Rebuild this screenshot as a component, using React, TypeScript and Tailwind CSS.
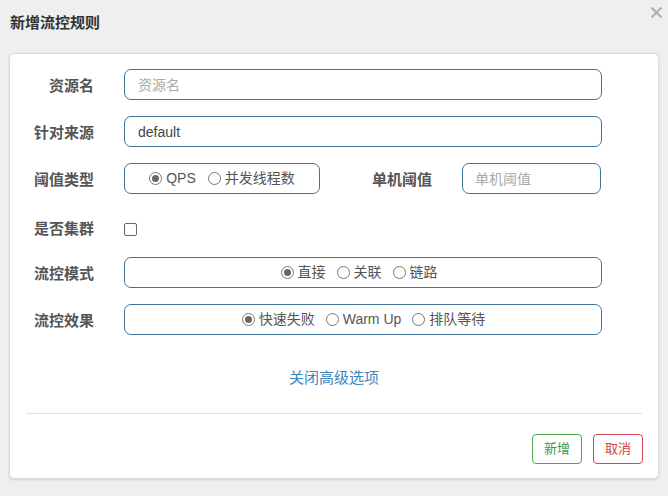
import React from 'react';

const FONT = { fontFamily: '"Liberation Sans", "Noto Sans CJK SC", sans-serif' };

function Radio({ checked, label }: { checked?: boolean; label: string }) {
  return (
    <span className="flex items-center gap-[4px] text-[14px] text-[#555]">
      <span className="w-[13px] h-[13px] rounded-full border border-[#777] flex items-center justify-center bg-white">
        {checked && <span className="w-[7px] h-[7px] rounded-full bg-[#666]" />}
      </span>
      <span>{label}</span>
    </span>
  );
}

function Label({ children }: { children: React.ReactNode }) {
  return (
    <div className="w-[84px] shrink-0 pt-[4px] text-right text-[15px] font-bold text-[#555]">{children}</div>
  );
}

const boxCls = 'h-[31px] rounded-[7px] border border-[#3f7296] bg-white';

export default function App() {
  return (
    <div className="w-[668px] h-[496px] bg-[#efeff1]" style={FONT}>
      <div className="flex items-start justify-between pl-[10px] pr-[5px] h-[42px]">
        <div className="text-[15px] font-bold text-[#333] pt-[12px]">新增流控规则</div>
        <svg width="13" height="13" viewBox="0 0 13 13" className="mt-[6px]">
          <path d="M1.5 1.5 L11.5 11.5 M11.5 1.5 L1.5 11.5" stroke="#b0b0b0" strokeWidth="2.2" />
        </svg>
      </div>
      <div className="mx-[9px] mt-[11px] h-[426px] bg-white rounded-[5px] border border-[#dcdcdc] shadow-sm">
        <div className="flex flex-col gap-[16px] pt-[15px]">
          <div className="flex items-center">
            <Label>资源名</Label>
            <input
              className={`${boxCls} ml-[30px] w-[478px] px-[13px] text-[14px] outline-none placeholder:text-[#aaa]`}
              placeholder="资源名"
            />
          </div>
          <div className="flex items-center">
            <Label>针对来源</Label>
            <input
              className={`${boxCls} ml-[30px] w-[478px] px-[13px] text-[14px] text-[#444] outline-none`}
              defaultValue="default"
            />
          </div>
          <div className="flex items-center">
            <Label>阈值类型</Label>
            <div className={`${boxCls} ml-[30px] w-[196px] flex items-center justify-center gap-[12px]`}>
              <Radio checked label="QPS" />
              <Radio label="并发线程数" />
            </div>
            <div className="ml-[52px] pt-[4px] text-[15px] font-bold text-[#555]">单机阈值</div>
            <input
              className={`${boxCls} ml-[30px] w-[139px] px-[12px] text-[14px] outline-none placeholder:text-[#aaa]`}
              placeholder="单机阈值"
            />
          </div>
          <div className="flex items-center h-[31px] pt-[4px]">
            <Label>是否集群</Label>
            <span className="ml-[30px] mt-[3px] w-[13px] h-[13px] rounded-[2px] border border-[#666] bg-white" />
          </div>
          <div className="flex items-center">
            <Label>流控模式</Label>
            <div className={`${boxCls} ml-[30px] w-[478px] flex items-center justify-center gap-[11px] pr-[8px]`}>
              <Radio checked label="直接" />
              <Radio label="关联" />
              <Radio label="链路" />
            </div>
          </div>
          <div className="flex items-center">
            <Label>流控效果</Label>
            <div className={`${boxCls} ml-[30px] w-[478px] flex items-center justify-center gap-[11px] pl-[1px]`}>
              <Radio checked label="快速失败" />
              <Radio label="Warm Up" />
              <Radio label="排队等待" />
            </div>
          </div>
        </div>
        <div className="text-center mt-[32px] text-[15px] text-[#3d84bd]">关闭高级选项</div>
        <div className="mx-[16px] mt-[23px] border-t border-[#e2e2e2]" />
        <div className="flex justify-end gap-[11px] pr-[15px] mt-[20px]">
          <button className="w-[50px] h-[30px] rounded-[4px] border border-[#4aa84a] text-[13px] text-[#3c9a3c] bg-white">
            新增
          </button>
          <button className="w-[50px] h-[30px] rounded-[4px] border border-[#d0455a] text-[13px] text-[#d0453f] bg-white">
            取消
          </button>
        </div>
      </div>
    </div>
  );
}
